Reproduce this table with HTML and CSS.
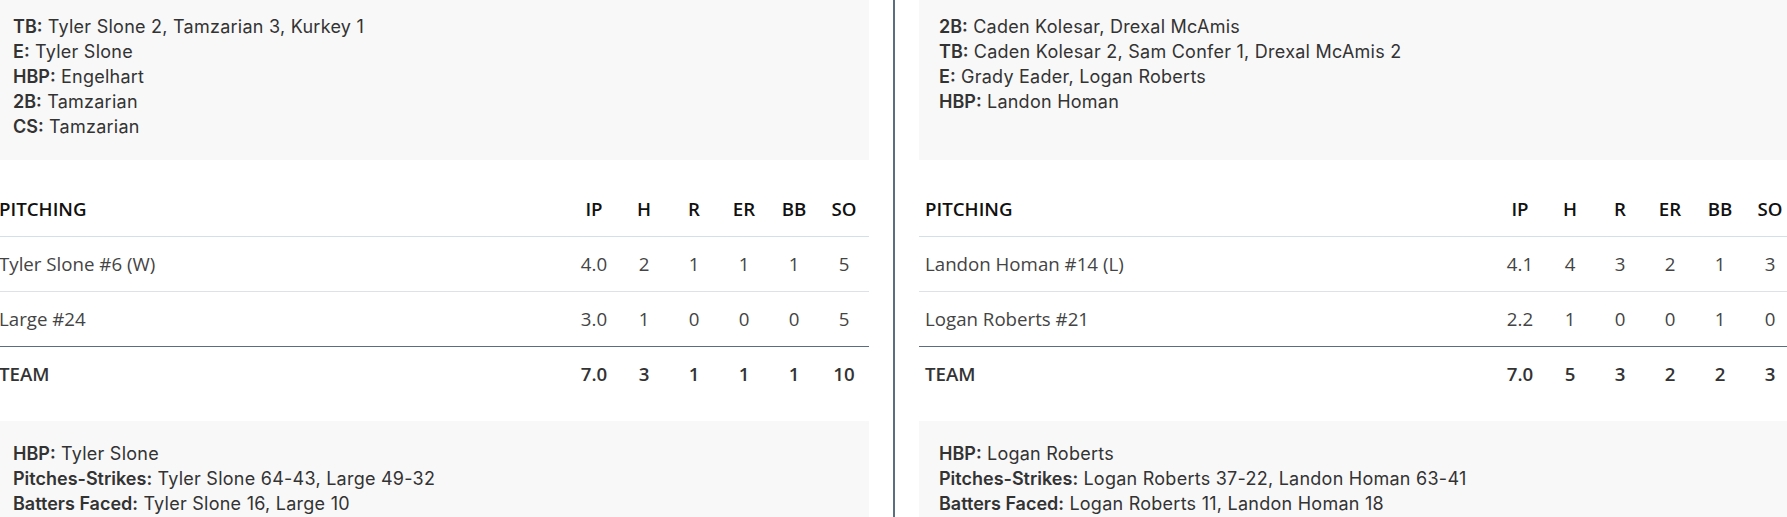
FILE: index.html
```html
<!DOCTYPE html>
<html>
<head>
<meta charset="utf-8">
<link rel="stylesheet" href="styles.css">
</head>
<body>
<div class="boxscore">
  <div class="team-col">
    <div class="notes notes-top">
      <div><b>TB:</b> Tyler Slone 2, Tamzarian 3, Kurkey 1</div>
      <div><b>E:</b> Tyler Slone</div>
      <div><b>HBP:</b> Engelhart</div>
      <div><b>2B:</b> Tamzarian</div>
      <div><b>CS:</b> Tamzarian</div>
    </div>
    <table class="pitching">
      <thead>
        <tr><th class="name">PITCHING</th><th>IP</th><th>H</th><th>R</th><th>ER</th><th>BB</th><th>SO</th></tr>
      </thead>
      <tbody>
        <tr><td class="name">Tyler Slone #6 (W)</td><td>4.0</td><td>2</td><td>1</td><td>1</td><td>1</td><td>5</td></tr>
        <tr><td class="name">Large #24</td><td>3.0</td><td>1</td><td>0</td><td>0</td><td>0</td><td>5</td></tr>
      </tbody>
      <tfoot>
        <tr><td class="name">TEAM</td><td>7.0</td><td>3</td><td>1</td><td>1</td><td>1</td><td>10</td></tr>
      </tfoot>
    </table>
    <div class="notes notes-bottom">
      <div><b>HBP:</b> Tyler Slone</div>
      <div><b>Pitches-Strikes:</b> Tyler Slone 64-43, Large 49-32</div>
      <div><b>Batters Faced:</b> Tyler Slone 16, Large 10</div>
    </div>
  </div>
  <div class="team-col">
    <div class="notes notes-top">
      <div><b>2B:</b> Caden Kolesar, Drexal McAmis</div>
      <div><b>TB:</b> Caden Kolesar 2, Sam Confer 1, Drexal McAmis 2</div>
      <div><b>E:</b> Grady Eader, Logan Roberts</div>
      <div><b>HBP:</b> Landon Homan</div>
    </div>
    <table class="pitching">
      <thead>
        <tr><th class="name">PITCHING</th><th>IP</th><th>H</th><th>R</th><th>ER</th><th>BB</th><th>SO</th></tr>
      </thead>
      <tbody>
        <tr><td class="name">Landon Homan #14 (L)</td><td>4.1</td><td>4</td><td>3</td><td>2</td><td>1</td><td>3</td></tr>
        <tr><td class="name">Logan Roberts #21</td><td>2.2</td><td>1</td><td>0</td><td>0</td><td>1</td><td>0</td></tr>
      </tbody>
      <tfoot>
        <tr><td class="name">TEAM</td><td>7.0</td><td>5</td><td>3</td><td>2</td><td>2</td><td>3</td></tr>
      </tfoot>
    </table>
    <div class="notes notes-bottom">
      <div><b>HBP:</b> Logan Roberts</div>
      <div><b>Pitches-Strikes:</b> Logan Roberts 37-22, Landon Homan 63-41</div>
      <div><b>Batters Faced:</b> Logan Roberts 11, Landon Homan 18</div>
    </div>
  </div>
</div>
</body>
</html>
```

FILE: styles.css
```css
html, body {
  margin: 0;
  padding: 0;
  background: #fff;
  overflow: hidden;
}

.boxscore {
  display: flex;
  margin: -6px 0 0 -7px;
  width: 1802px;
}

.team-col {
  width: 876px;
  flex: none;
  padding-bottom: 40px;
}

.team-col + .team-col {
  margin-left: 24px;
  padding-left: 24px;
  border-left: 2px solid #5b6d7e;
}

.notes {
  background: #f8f8f8;
  padding: 20px;
  font-family: Inter, "Noto Sans", sans-serif;
  font-size: 18px;
  line-height: 25px;
  letter-spacing: 0.25px;
  color: #333;
}

.notes b {
  font-weight: 600;
  letter-spacing: 0;
  color: #333;
}

.notes-top {
  height: 126px;
}

.notes-bottom {
  height: 120px;
}

.pitching {
  width: 100%;
  border-collapse: collapse;
  margin: 22px 0 20px;
  font-family: "Open Sans", sans-serif;
  font-size: 18.7px;
  line-height: 24px;
  color: #444;
}

.pitching th,
.pitching td {
  padding: 15px 0;
  width: 50px;
  text-align: center;
  font-weight: 400;
}

.pitching .name {
  width: auto;
  text-align: left;
  padding-left: 6px;
}

.pitching th {
  font-weight: 600;
  color: #111;
}

.pitching thead tr {
  border-bottom: 1px solid #d3e0ea;
}

.pitching tbody tr + tr {
  border-top: 1px solid #dee2e6;
}

.pitching tfoot tr {
  border-top: 1px solid #5b6d7e;
}

.pitching tfoot td {
  font-weight: 600;
  color: #333;
}
```
